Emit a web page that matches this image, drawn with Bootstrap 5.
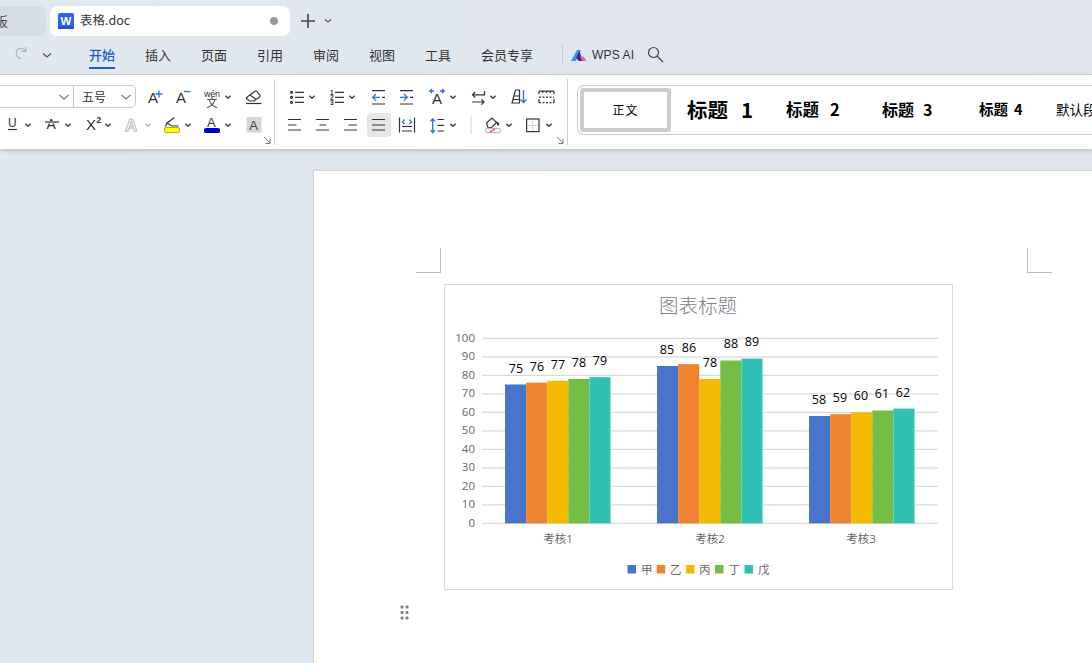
<!doctype html>
<html lang="zh">
<head>
<meta charset="utf-8">
<title>表格.doc</title>
<link href="https://cdn.jsdelivr.net/npm/bootstrap@5.3.0/dist/css/bootstrap.min.css" rel="stylesheet">
<style>
html,body{height:663px;overflow:hidden}
body{background:linear-gradient(90deg,#e1e8ef,#e1e5ee);font-family:"Noto Sans CJK SC","Liberation Sans",sans-serif;color:#333}
svg text{font-family:"Liberation Sans","Noto Sans CJK SC",sans-serif}
.tabrow{height:36px;padding-top:6px}
.tab-old{width:46px;height:30px;background:#d6dde3;border-radius:0 7px 7px 0;font-size:13px;line-height:29px;margin-right:4px;padding-left:0;overflow:hidden;color:#444}
.tab-old span{margin-left:-5px}
.tab-cur{width:240px;height:30px;background:#fff;border-radius:7px;padding:0 11px 0 8px;font-size:12.5px;color:#333}
.tab-cur .tname{margin-left:6px;padding-bottom:2px}
.tab-dot{width:8px;height:8px;border-radius:50%;background:#9a9a9a;margin-right:1px}
.menurow{height:38px;font-size:13px;color:#333}
.menu-head{width:89px;flex:none}
.menu-item{width:56px;flex:none;line-height:38px;height:38px;position:relative}
.menu-item.on{color:#1a5fc7;font-weight:500}
.menu-item.on::after{content:"";display:block;width:26px;height:2px;background:#1a5fc7;margin-top:-7px}
.menu-wide{width:81px}
.menu-sep{width:1px;height:20px;background:#c8ced4;flex:none}
.ai-txt{font:12px "Liberation Sans",sans-serif;letter-spacing:.15px;margin:0 13px 0 5px}
.ribbon{height:75px;background:#fff;border-top:1px solid #c9cdd2;box-shadow:0 2px 4px rgba(90,100,110,.28);position:relative;z-index:1;overflow:hidden}
.rgroup{margin-top:4px;height:66px;padding-top:6px;border-right:1px solid #d2d2d2;flex:none;position:relative}
.rg1{width:275px}
.rg2{width:293px}
.rrow{height:24px;margin-bottom:4px}
.tool{padding:0;border:0;background:none;display:block;line-height:0;flex:none}
.tool.sel{background:#e6e6e6;border-radius:4px}
.fontbox{width:136px;height:23px;border:1px solid #c9c9c9;border-left:0;border-radius:0 5px 5px 0;flex:none;font-size:12px;color:#333}
.fb-name{width:74px;border-right:1px solid #c9c9c9;height:100%;padding-right:3px}
.fb-size{padding:0 3px 0 8px;flex:1}
.launch{position:absolute;right:2px;bottom:0;line-height:0}
.gallery{margin:10px 0 0 9px;height:50px;flex:1;min-width:0;border:1px solid #c9c9c9;border-right:0;border-radius:7px 0 0 7px;padding:2px;color:#000;overflow:hidden;white-space:nowrap}
.st-body{width:91px;height:44px;flex:none;border:4px solid #cdcdcd;border-radius:3px;font-size:12px;letter-spacing:1px;margin-right:16px}
.st1,.st2,.st3,.st4,.st5{padding-bottom:2px}
.st1{font-size:20.5px;font-weight:700;width:99px;flex:none}
.st2{font-size:16.5px;font-weight:700;width:96px;flex:none}
.st3{font-size:16px;font-weight:700;width:97px;flex:none}
.st4{font-size:14.5px;font-weight:700;width:77px;flex:none}
.st5{font-size:13.5px;flex:none}
.wsgap{margin-left:13px}
.wsgap-m{margin-left:11px}
.wsgap-s{margin-left:9px}
.wsgap-xs{margin-left:6px}
.stage{padding:21px 0 0 313px}
.docpage{height:500px;background:#fff;border:1px solid #d0d4d8;border-right:0;padding:77px 40px 0 102px;box-shadow:0 0 3px rgba(120,130,140,.15)}
.crop-l{width:25px;height:25px;border-right:1px solid #bdbdbd;border-bottom:1px solid #bdbdbd}
.crop-r{width:25px;height:25px;border-left:1px solid #bdbdbd;border-bottom:1px solid #bdbdbd}
.chartbox{width:509px;height:306px;border:1px solid #d9d9d9;margin:11px 0 0 28px;line-height:0}
.grip{margin:15px 0 0 -16px;line-height:0}
.ln{fill:none;stroke:#333;stroke-width:1.2}
.bl{fill:none;stroke:#2f6de8;stroke-width:1.3}
.ch{fill:none;stroke:#444;stroke-width:1.5}
.ch-s{fill:none;stroke:#777;stroke-width:1.1}
.ch-d{fill:none;stroke:#b5b5b5;stroke-width:1.4}
.ax{font-size:11.5px;fill:#666}
.dl{font-size:12.5px;fill:#000;text-anchor:middle}
.ax text,.dl text{font-family:"Open Sans","Noto Sans CJK SC",sans-serif}
.ttl{font-weight:300}
.grid{stroke:#d9d9d9;stroke-width:1.2}
</style>
</head>
<body>
<svg class="d-none" xmlns="http://www.w3.org/2000/svg">
<defs>
<g id="c"><path class="ch" d="M-2.600-1.300 0 1.300 2.600-1.300"/></g>
<g id="cs"><path class="ch-s" d="M-4.500-2 0 2 4.500-2"/></g>
<g id="cd"><path class="ch-d" d="M-2.600-1.300 0 1.300 2.600-1.300"/></g>
<g id="aplus"><text x="0" y="15" font-size="15" fill="#333">A</text><path class="bl" d="M7.500 6H14.500M11 2.500V9.500"/></g>
<g id="aminus"><text x="0" y="15" font-size="15" fill="#333">A</text><path class="bl" d="M8 3.500H14.500"/></g>
<g id="wen"><text x="0" y="8.500" font-size="9" textLength="16" fill="#333">wén</text><text x="2.500" y="18.500" font-size="11" fill="#333">文</text></g>
<g id="eraser"><path class="ln" d="M1.500 9.500 10 3.300Q11.300 2.500 12 3.500L14.800 7Q15.500 8 14.500 9L9 13H4.500L1.500 10.500Z"/><path d="M5 7 11 11.300" class="ln"/><path class="ln" d="M1 15.500H16.500"/></g>
<g id="bul"><circle class="ln" cx="1.500" cy="4.300" r="1"/><circle class="ln" cx="1.500" cy="9.300" r="1"/><circle class="ln" cx="1.500" cy="14.300" r="1"/><path class="ln" d="M5 4.300H14M5 9.300H14M5 14.300H14"/></g>
<g id="num"><text x="0" y="6.500" font-size="6.500" font-weight="700" fill="#333">1</text><text x="0" y="11.500" font-size="6.500" font-weight="700" fill="#333">2</text><text x="0" y="16.500" font-size="6.500" font-weight="700" fill="#333">3</text><path class="ln" d="M5 4.300H14M5 9.300H14M5 14.300H14"/></g>
<g id="outd"><path class="ln" d="M0 2.700H13M0 16H13M10 9.300H13"/><path class="bl" d="M8 9.300H.5M4 6 .7 9.300 4 12.600"/></g>
<g id="ind"><path class="ln" d="M0 2.700H13M0 16H13M10 9.300H13"/><path class="bl" d="M0 9.300H7.500M4 6 7.300 9.300 4 12.600"/></g>
<g id="aarr"><text x="3" y="15.500" font-size="15" fill="#333">A</text><path class="bl" d="M.8 3H5M3 1 .8 3 3 5M15.200 3H11M13 1 15.200 3 13 5"/></g>
<g id="swp"><path class="ln" d="M13.500 3V6.800H1.500M4.200 4 1.500 6.800 4.200 9.500M1 14H13M10.300 11.300 13 14 10.300 16.700"/></g>
<g id="srt"><path class="ln" d="M1 15 4.500 2H8.500V15ZM2.800 8H8.500M2 11.500H8.500"/><path class="bl" d="M12.500 2V14.500M9.500 11.500 12.500 14.500 15.500 11.500"/></g>
<g id="tbl"><path class="ln" d="M0 3.200H15M0 3.200V6M3.700 3.200V5M7.500 3.200V5M11.200 3.200V5M15 3.200V6"/><path class="ln" stroke-dasharray="2 1.500" d="M0 9.200H15M0 14.700H15"/><path class="ln" d="M0 11V14.700M15 11V14.700"/></g>
<g id="und"><text x="1" y="10.500" font-size="12" fill="#333">U</text><path class="ln" d="M1 13.500H10"/></g>
<g id="stk"><text x="1.500" y="13" font-size="14" fill="#333">A</text><path d="M0 6.200H15" stroke="#fff" stroke-width="2.400"/><path class="ln" d="M0 6H14"/></g>
<g id="sup"><text x="0" y="14" font-size="15" fill="#333">X</text><text x="10.500" y="7" font-size="8.500" font-weight="700" fill="#333">2</text></g>
<g id="aout"><text x="0" y="15" font-size="17" font-weight="700" fill="#fff" stroke="#b9b9b9" stroke-width=".9">A</text></g>
<g id="hl"><rect x=".5" y="11.500" width="15" height="5" rx="1.600" fill="#ffff00" stroke="#b4ad20"/><path class="ln" d="M1.500 10.500 3 7 10.500 1.500M3 7 7 9.500M7 10 14.500 10"/></g>
<g id="fc"><text x="3" y="11" font-size="13" fill="#333">A</text><rect x="0" y="12" width="16" height="5" rx="1.800" fill="#0000cc"/></g>
<g id="abox"><rect x=".5" y="1" width="15" height="15.500" fill="#d6d6d6"/><text x="3.300" y="13.500" font-size="13" fill="#444">A</text></g>
<g id="alL"><path class="ln" d="M0 3.500H13M0 9H8.500M0 14H13"/></g>
<g id="alC"><path class="ln" d="M0 3.500H13M3.500 9H10M0 14H13"/></g>
<g id="alR"><path class="ln" d="M0 3.500H13M4.500 9H13M0 14H13"/></g>
<g id="alJ"><path class="ln" d="M0 3.500H13M0 9H13M0 14H13"/></g>
<g id="dst"><path class="ln" d="M.5 1.500V16.500M15.500 1.500V16.500M3 10.500H13M3 15H13"/><path class="bl" d="M5.500 3.500 3.500 6 5.500 8M10.500 3.500 12.500 6 10.500 8"/></g>
<g id="lsp"><path class="bl" d="M2.700 3V16.500M.5 5.200 2.700 3 4.900 5.200M.5 14.300 2.700 16.500 4.900 14.300"/><path class="ln" d="M7.500 3.500H14M7.500 9.300H14M7.500 15H14"/></g>
<g id="fil"><path class="ln" d="M1.500 7 7 2 11.500 6.500 6.500 11.500H3Z"/><path d="M11.500 6 13 9.500 14 7.500Z" fill="#333" stroke="#333"/><rect x=".5" y="12.300" width="15" height="4.400" rx="2" fill="#fff" stroke="#aaa"/><path d="M5 16 10 13" stroke="#e03a2e" stroke-width="1.200"/></g>
<g id="brd"><rect class="ln" x=".6" y="3" width="12.400" height="12.600"/><path d="M6.800 4.500V14.500M2 9.300H12" stroke="#bbb" stroke-dasharray="1.200 1" fill="none"/></g>
</defs>
</svg>

<div class="tabrow d-flex align-items-start">
  <div class="tab-old"><span>板</span></div>
  <div class="tab-cur d-flex align-items-center">
    <svg width="16" height="16" viewBox="0 0 16 16"><rect width="16" height="16" rx="2" fill="#2f62f0"/><rect y="13.500" width="16" height="2.500" fill="#2750c8"/><text x="8" y="11.500" text-anchor="middle" font-size="11.500" font-weight="700" fill="#fff">W</text></svg>
    <span class="tname">表格.doc</span>
    <span class="tab-dot ms-auto"></span>
  </div>
  <svg width="60" height="30" viewBox="0 0 60 30"><path d="M11 15H25M18 8V22" stroke="#4a4a4a" stroke-width="1.700" fill="none"/><path d="M35 13.500 38 16 41 13.500" fill="none" stroke="#555" stroke-width="1.200"/></svg>
</div>

<div class="menurow d-flex align-items-center">
  <div class="menu-head d-flex align-items-center">
    <svg width="74" height="24" viewBox="0 0 74 24"><path d="M21 16C17 14 15.500 11 16.500 8C17.500 5 22 4 25.500 8M25.700 3.800V8.300H21.500" fill="none" stroke="#adb3b9" stroke-width="1.200"/><path d="M43 10.500 47 14 51 10.500" fill="none" stroke="#555" stroke-width="1.300"/></svg>
  </div>
  <div class="menu-item on">开始</div>
  <div class="menu-item">插入</div>
  <div class="menu-item">页面</div>
  <div class="menu-item">引用</div>
  <div class="menu-item">审阅</div>
  <div class="menu-item">视图</div>
  <div class="menu-item">工具</div>
  <div class="menu-item menu-wide">会员专享</div>
  <div class="menu-sep me-2"></div>
  <svg width="16" height="13" viewBox="0 0 16 13"><path d="M0 12 6 1H10L4.500 12Z" fill="#3f8cf7"/><path d="M5 9 8.500 2 11.500 12H8Z" fill="#2d2a8c"/><path d="M9 7.500H12.500L15.500 12H11Z" fill="#f35aa3"/></svg>
  <span class="ai-txt">WPS AI</span>
  <svg width="18" height="18" viewBox="0 0 18 18"><circle cx="6.500" cy="6.500" r="5" fill="none" stroke="#4a4a4a" stroke-width="1.200"/><path d="M10.200 10.200 16 16" stroke="#4a4a4a" stroke-width="1.300"/></svg>
</div>

<div class="ribbon d-flex">
  <div class="rgroup rg1">
    <div class="rrow d-flex">
      <div class="fontbox d-flex">
        <div class="fb-name d-flex align-items-center justify-content-end"><svg width="12" height="8"><use href="#cs" x="6" y="4"/></svg></div>
        <div class="fb-size d-flex align-items-center justify-content-between">五号<svg width="12" height="8"><use href="#cs" x="6" y="4"/></svg></div>
      </div>
      <button class="tool" type="button"><svg width="33" height="24"><use href="#aplus" x="12" y="3"/></svg></button>
      <button class="tool" type="button"><svg width="28" height="24"><use href="#aminus" x="7" y="3"/></svg></button>
      <button class="tool" type="button"><svg width="42" height="24"><use href="#wen" x="7" y="3"/><use href="#c" x="31" y="12"/></svg></button>
      <button class="tool" type="button"><svg width="35" height="24"><use href="#eraser" x="6" y="3"/></svg></button>
    </div>
    <div class="rrow d-flex">
      <button class="tool" type="button"><svg width="38" height="24"><use href="#und" x="7" y="3"/><use href="#c" x="28" y="12"/></svg></button>
      <button class="tool" type="button"><svg width="40" height="24"><use href="#stk" x="7" y="3"/><use href="#c" x="30" y="12"/></svg></button>
      <button class="tool" type="button"><svg width="40" height="24"><use href="#sup" x="8" y="3"/><use href="#c" x="30" y="12"/></svg></button>
      <button class="tool" type="button"><svg width="40" height="24"><use href="#aout" x="7" y="3"/><use href="#cd" x="30" y="12"/></svg></button>
      <button class="tool" type="button"><svg width="40" height="24"><use href="#hl" x="6" y="3"/><use href="#c" x="30" y="12"/></svg></button>
      <button class="tool" type="button"><svg width="40" height="24"><use href="#fc" x="6" y="3"/><use href="#c" x="30" y="12"/></svg></button>
      <button class="tool" type="button"><svg width="34" height="24"><use href="#abox" x="8" y="3"/></svg></button>
    </div>
    <span class="launch"><svg width="9" height="9" viewBox="0 0 9 9"><path d="M1 1 7 7M7 3V7.500H2.500" fill="none" stroke="#777" stroke-width="1"/></svg></span>
  </div>
  <div class="rgroup rg2">
    <div class="rrow d-flex">
      <button class="tool" type="button"><svg width="47" height="24"><use href="#bul" x="15" y="3"/><use href="#c" x="37" y="12"/></svg></button>
      <button class="tool" type="button"><svg width="40" height="24"><use href="#num" x="8" y="3"/><use href="#c" x="30" y="12"/></svg></button>
      <button class="tool" type="button"><svg width="30" height="24"><use href="#outd" x="10" y="3"/></svg></button>
      <button class="tool" type="button"><svg width="28" height="24"><use href="#ind" x="8" y="3"/></svg></button>
      <button class="tool" type="button"><svg width="43" height="24"><use href="#aarr" x="9" y="3"/><use href="#c" x="33" y="12"/></svg></button>
      <button class="tool" type="button"><svg width="40" height="24"><use href="#swp" x="8" y="3"/><use href="#c" x="30" y="12"/></svg></button>
      <button class="tool" type="button"><svg width="29" height="24"><use href="#srt" x="8" y="3"/></svg></button>
      <button class="tool" type="button"><svg width="34" height="24"><use href="#tbl" x="7" y="3"/></svg></button>
    </div>
    <div class="rrow d-flex">
      <button class="tool" type="button"><svg width="33" height="24"><use href="#alL" x="13" y="3"/></svg></button>
      <button class="tool" type="button"><svg width="28" height="24"><use href="#alC" x="8" y="3"/></svg></button>
      <button class="tool" type="button"><svg width="31" height="24"><use href="#alR" x="8" y="3"/></svg></button>
      <button class="tool sel" type="button"><svg width="24" height="24"><use href="#alJ" x="5" y="3"/></svg></button>
      <button class="tool" type="button"><svg width="32" height="24"><use href="#dst" x="8" y="3"/></svg></button>
      <button class="tool" type="button"><svg width="40" height="24"><use href="#lsp" x="7" y="3"/><use href="#c" x="30" y="12"/></svg></button>
      <svg width="16" height="24" class="flex-shrink-0"><path d="M8 3V21" stroke="#d2d2d2"/></svg>
      <button class="tool" type="button"><svg width="40" height="24"><use href="#fil" x="6" y="3"/><use href="#c" x="30" y="12"/></svg></button>
      <button class="tool" type="button"><svg width="40" height="24"><use href="#brd" x="7" y="3"/><use href="#c" x="30" y="12"/></svg></button>
    </div>
    <span class="launch"><svg width="9" height="9" viewBox="0 0 9 9"><path d="M1 1 7 7M7 3V7.500H2.500" fill="none" stroke="#777" stroke-width="1"/></svg></span>
  </div>
  <div class="gallery d-flex align-items-center">
    <div class="st-body d-flex align-items-center justify-content-center">正文</div>
    <div class="st1">标题<span class="wsgap">1</span></div>
    <div class="st2">标题<span class="wsgap-m">2</span></div>
    <div class="st3">标题<span class="wsgap-s">3</span></div>
    <div class="st4">标题<span class="wsgap-xs">4</span></div>
    <div class="st5">默认段落字体</div>
  </div>
</div>

<div class="stage">
  <div class="docpage">
    <div class="d-flex justify-content-between">
      <div class="crop-l"></div>
      <div class="crop-r"></div>
    </div>
    <div class="chartbox">
      <svg width="507" height="304" viewBox="445 285 507 304">
        <text class="ttl" x="698" y="313" text-anchor="middle" font-size="19.500" fill="#7b8087">图表标题</text>
        <g class="grid">
          <path d="M482 338.300H938M482 356.800H938M482 375.300H938M482 393.800H938M482 412.300H938M482 430.800H938M482 449.300H938M482 467.800H938M482 486.300H938M482 504.800H938M482 523.300H938"/>
        </g>
        <g class="ax" text-anchor="end" transform="translate(0,-1)">
          <text x="475" y="342.500">100</text><text x="475" y="361">90</text><text x="475" y="379.500">80</text><text x="475" y="398">70</text><text x="475" y="416.500">60</text><text x="475" y="435">50</text><text x="475" y="453.500">40</text><text x="475" y="472">30</text><text x="475" y="490.500">20</text><text x="475" y="509">10</text><text x="475" y="527.500">0</text>
        </g>
        <g fill="#4874cb"><rect x="505" y="384.500" width="21.100" height="138.800"/><rect x="657" y="366" width="21.100" height="157.300"/><rect x="809" y="416" width="21.100" height="107.300"/></g>
        <g fill="#ee822f"><rect x="526.100" y="382.700" width="21.100" height="140.600"/><rect x="678.100" y="364.200" width="21.100" height="159.100"/><rect x="830.100" y="414.200" width="21.100" height="109.100"/></g>
        <g fill="#f2ba02"><rect x="547.200" y="380.800" width="21.100" height="142.500"/><rect x="699.200" y="379" width="21.100" height="144.300"/><rect x="851.200" y="412.300" width="21.100" height="111"/></g>
        <g fill="#75bd42"><rect x="568.300" y="379" width="21.100" height="144.300"/><rect x="720.300" y="360.500" width="21.100" height="162.800"/><rect x="872.300" y="410.500" width="21.100" height="112.800"/></g>
        <g fill="#30c0b4"><rect x="589.400" y="377.200" width="21.100" height="146.100"/><rect x="741.400" y="358.600" width="21.100" height="164.700"/><rect x="893.400" y="408.600" width="21.100" height="114.700"/></g>
        <g class="dl" transform="translate(0,-1)">
          <text x="516" y="373.500">75</text><text x="537" y="371.500">76</text><text x="558" y="369.500">77</text><text x="579" y="367.500">78</text><text x="600" y="366">79</text>
          <text x="667" y="354.500">85</text><text x="689" y="353">86</text><text x="710" y="368">78</text><text x="731" y="349">88</text><text x="752" y="347">89</text>
          <text x="819" y="405">58</text><text x="840" y="403">59</text><text x="861" y="401">60</text><text x="882" y="399">61</text><text x="903" y="397.500">62</text>
        </g>
        <g class="ax" text-anchor="middle">
          <text x="558" y="543">考核1</text><text x="710" y="543">考核2</text><text x="861" y="543">考核3</text>
        </g>
        <rect x="627.500" y="565" width="8.500" height="8.500" fill="#4874cb"/>
        <rect x="656.700" y="565" width="8.500" height="8.500" fill="#ee822f"/>
        <rect x="686" y="565" width="8.500" height="8.500" fill="#f2ba02"/>
        <rect x="715" y="565" width="8.500" height="8.500" fill="#75bd42"/>
        <rect x="744.500" y="565" width="8.500" height="8.500" fill="#30c0b4"/>
        <g class="ax">
          <text x="641" y="573.500">甲</text><text x="670" y="573.500">乙</text><text x="699" y="573.500">丙</text><text x="728.500" y="573.500">丁</text><text x="758" y="573.500">戊</text>
        </g>
      </svg>
    </div>
    <div class="grip"><svg width="9" height="15" viewBox="0 0 9 15"><g fill="#808080"><rect x="0.500" y="0.500" width="3" height="3" rx="1"/><rect x="5.500" y="0.500" width="3" height="3" rx="1"/><rect x="0.500" y="6" width="3" height="3" rx="1"/><rect x="5.500" y="6" width="3" height="3" rx="1"/><rect x="0.500" y="11.500" width="3" height="3" rx="1"/><rect x="5.500" y="11.500" width="3" height="3" rx="1"/></g></svg></div>
  </div>
</div>
<script src="https://cdn.jsdelivr.net/npm/bootstrap@5.3.0/dist/js/bootstrap.bundle.min.js"></script>
</body>
</html>
